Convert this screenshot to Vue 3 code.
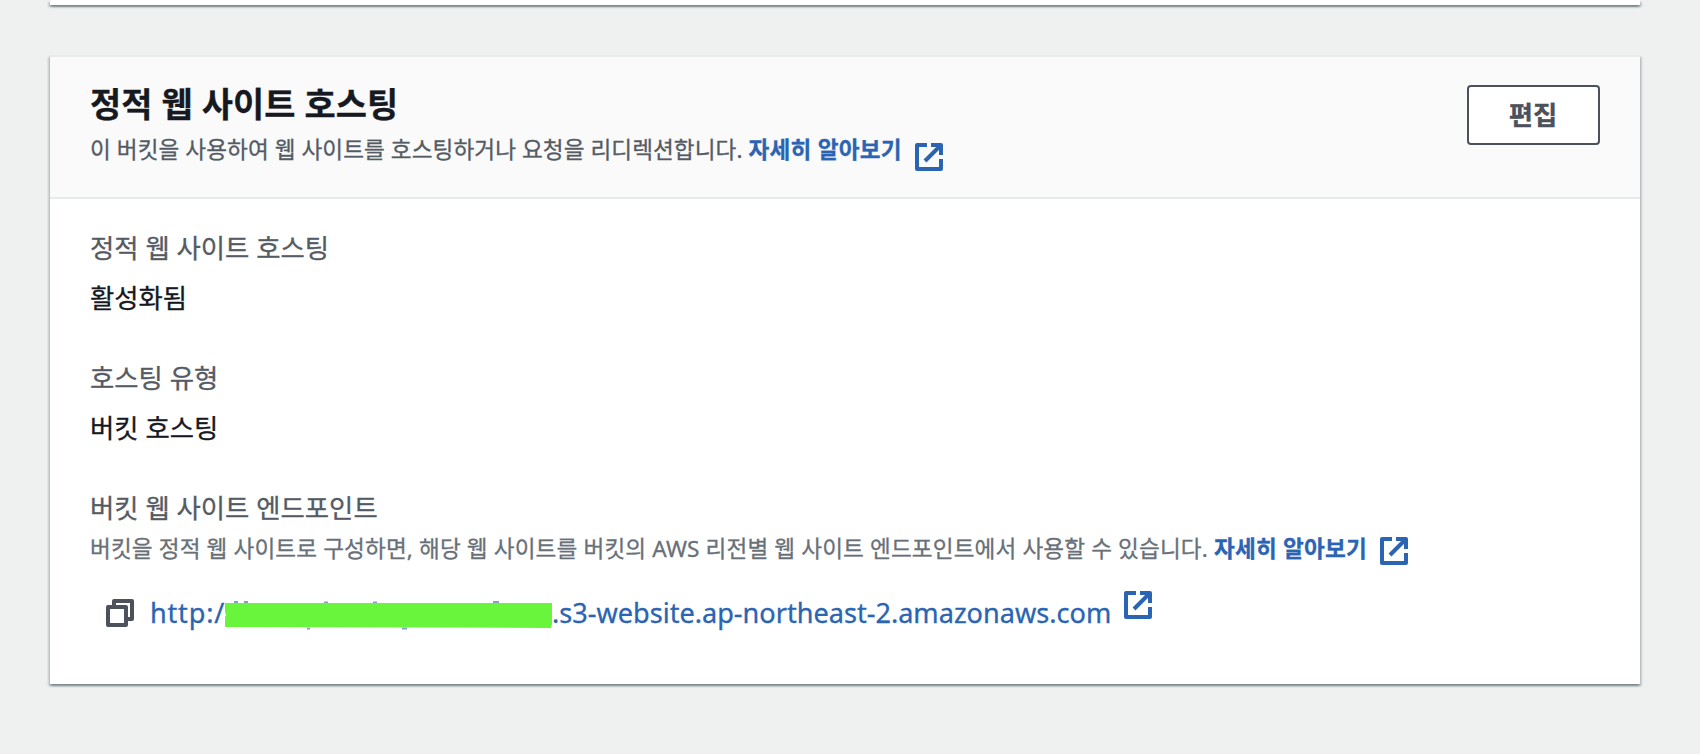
<template>
    <div class="page">
        <section class="card previous-card"></section>

        <section class="card">
            <header class="card-header">
                <div>
                    <h2>정적 웹 사이트 호스팅</h2>
                    <p class="description">
                        <span class="intro">이 버킷을 사용하여 웹 사이트를 호스팅하거나 요청을 리디렉션합니다.</span>
                        <a class="learn-more" href="#">자세히 알아보기</a>
                        <svg class="icon icon-low" viewBox="0 0 28 28">
                            <path :d="externalFrame" />
                            <path :d="externalArrow" />
                        </svg>
                    </p>
                </div>
                <button>편집</button>
            </header>

            <div class="card-body">
                <div v-for="field in fields" :key="field.label" class="field">
                    <div class="label">{{ field.label }}</div>
                    <div class="value">{{ field.value }}</div>
                </div>

                <div class="field">
                    <div class="label">버킷 웹 사이트 엔드포인트</div>
                    <p class="description hint">
                        <span class="guide">버킷을 정적 웹 사이트로 구성하면, 해당 웹 사이트를 버킷의 AWS 리전별 웹 사이트 엔드포인트에서 사용할 수 있습니다.</span>
                        <a class="learn-more" href="#">자세히 알아보기</a>
                        <svg class="icon icon-hint" viewBox="0 0 28 28">
                            <path :d="externalFrame" />
                            <path :d="externalArrow" />
                        </svg>
                    </p>
                    <div class="endpoint">
                        <svg class="copy-icon" viewBox="0 0 28 28">
                            <path d="M8 7V2H26V20H21" />
                            <path d="M2 8H20V26H2Z" />
                        </svg>
                        <a class="url" href="#">
                            <span class="scheme">http:/</span>
                            <svg class="mask" viewBox="0 0 327 25">
                                <!-- tips of the covered letters -->
                                <path class="tips" d="M9 -1h4M19 -1h4M99 -.5h4M148 -.5h4M268 -1h6M82 25.5h3M177 25.5h5" />
                                <path d="M0 0H327V21L326 25L0 24V14L1 12L0 9Z" />
                            </svg>
                            <span class="host">.s3-website.ap-northeast-2.amazonaws.com</span>
                        </a>
                        <svg class="icon icon-high" viewBox="0 0 28 28">
                            <path :d="externalFrame" />
                            <path :d="externalArrow" />
                        </svg>
                    </div>
                </div>
            </div>
        </section>
    </div>
</template>

<script setup>
const externalFrame = 'M12 2H2V26H26V16';
const externalArrow = 'M16 2H26V12M26 2L10 18';

const fields = [
    { label: '정적 웹 사이트 호스팅', value: '활성화됨' },
    { label: '호스팅 유형', value: '버킷 호스팅' },
];
</script>

<style>
body {
    background: #eff1f1;
}
</style>

<style scoped>
.page {
    box-sizing: border-box;
    height: 754px;
    padding: 0 60px 0 50px;
    overflow: hidden;
    background: #eff1f1;
    color: #16191f;
    font-family: "Noto Sans", "Noto Sans CJK KR", sans-serif;
    font-size: 26.4px;
    white-space: nowrap;
    -webkit-text-stroke: 0.3px currentColor;
}

.card {
    box-sizing: border-box;
    height: 629px;
    border-top: 2px solid #e7ebea;
    background: #fff;
    box-shadow: 0 2px 2px 0 rgba(0, 28, 36, 0.3), 2px 2px 2px 0 rgba(0, 28, 36, 0.15), -2px 2px 2px 0 rgba(0, 28, 36, 0.15);
}

.previous-card {
    height: 5px;
    margin-bottom: 50px;
    border-top: 0;
}

.card-header {
    display: flex;
    justify-content: space-between;
    align-items: flex-start;
    box-sizing: border-box;
    height: 142px;
    padding: 28px 40px 0;
    border-bottom: 2px solid #e7ebea;
    background: #fafafa;
}

h2 {
    margin: -1px 0 4px;
    font-size: 33.9px;
    font-weight: 700;
    line-height: 40px;
    letter-spacing: 0.1px;
}

.description {
    display: flex;
    align-items: center;
    height: 44px;
    margin: 0;
    color: #545b64;
    font-size: 22.6px;
    line-height: 44px;
}

.intro {
    letter-spacing: 0.07px;
}

.guide {
    letter-spacing: 0.13px;
}

.hint {
    height: 38px;
    color: #687078;
}

.learn-more {
    margin-left: 6px;
    color: #2a64b2;
    font-weight: 700;
    letter-spacing: 0.22px;
    text-decoration: none;
}

.icon {
    flex: none;
    width: 28px;
    height: 28px;
    margin-left: 13px;
    fill: none;
    stroke: #2a64b2;
    stroke-width: 4;
    stroke-linejoin: round;
}

.icon-low {
    margin-top: 13px;
}

.icon-hint {
    margin-top: 3px;
}

.icon-high {
    margin: 0 0 16px 13px;
}

button {
    box-sizing: border-box;
    width: 133px;
    height: 60px;
    padding: 0 1px 4px 0;
    border: 2px solid #4c515b;
    border-radius: 4px;
    background: #fff;
    color: #4c515b;
    font-family: inherit;
    font-size: 26.4px;
    font-weight: 700;
}

.card-body {
    padding: 27px 40px;
}

.field {
    margin-bottom: 30px;
}

.label {
    height: 44px;
    color: #545b64;
    line-height: 44px;
}

.value {
    height: 56px;
    line-height: 56px;
}

.endpoint {
    display: flex;
    align-items: center;
    height: 44px;
    margin-top: 23px;
    padding-left: 16px;
}

.copy-icon {
    width: 28px;
    height: 28px;
    fill: none;
    stroke: #4c515b;
    stroke-width: 4;
    stroke-linejoin: round;
}

.url {
    display: flex;
    align-items: center;
    margin-left: 16px;
    color: #2a64b2;
    font-size: 27.1px;
    line-height: 44px;
    text-decoration: none;
}

.scheme {
    width: 75px;
    letter-spacing: 0.8px;
}

.mask {
    width: 327px;
    height: 25px;
    margin-top: 4px;
    overflow: visible;
    fill: #6af53d;
}

.tips {
    stroke: #2a64b2;
    stroke-width: 2;
    opacity: 0.6;
}
</style>
